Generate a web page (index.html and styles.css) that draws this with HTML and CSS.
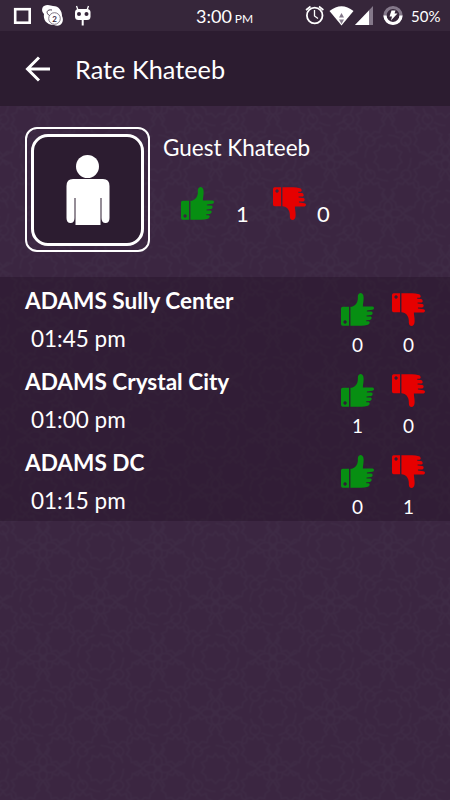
FILE: index.html
```html
<!DOCTYPE html>
<html lang="en">
<head>
  <meta charset="UTF-8">
  <title>Rate Khateeb</title>
  <link rel="stylesheet" href="styles.css">
</head>
<body>

  <!-- background pattern + shared icons -->
  <svg class="backdrop" width="450" height="800">
    <defs>
      <path id="star" d="M0-15 3-11 8-13 9-8 14-6 11-1 14 4 10 7 9 12 4 11 0 15-4 11-9 12-10 7-14 4-11-1-14-6-9-8-8-13-3-11Z"/>
      <g id="knot">
        <ellipse cx="0" cy="-6" rx="4" ry="6"/>
        <ellipse cx="0" cy="6" rx="4" ry="6"/>
        <ellipse cx="-7" cy="0" rx="7" ry="4"/>
        <ellipse cx="7" cy="0" rx="7" ry="4"/>
        <path d="M-14 0-24-5M-14 0-24 5M14 0 24-5M14 0 24 5M0-12-5-20M0-12 5-20M0 12-5 20M0 12 5 20"/>
      </g>
      <g id="rosette">
        <use href="#star"/>
        <circle r="23" stroke-dasharray="12 6"/>
        <circle cx="-18" cy="-17" r="5"/>
        <circle cx="18" cy="-17" r="5"/>
        <circle cx="-18" cy="17" r="5"/>
        <circle cx="18" cy="17" r="5"/>
      </g>
      <pattern id="arabesque" x="-14.5" y="-8.5" width="115" height="111" patternUnits="userSpaceOnUse">
        <g fill="none" stroke="#3e2b45" stroke-width="1.5">
          <use href="#rosette" x="57.5" y="55.5"/>
          <use href="#rosette"/>
          <use href="#rosette" x="115"/>
          <use href="#rosette" y="111"/>
          <use href="#rosette" x="115" y="111"/>
          <use href="#star" x="17.5" y="38"/>
          <use href="#star" x="17.5" y="73"/>
          <use href="#star" x="97.5" y="38"/>
          <use href="#star" x="97.5" y="73"/>
          <use href="#star" x="40" y="18"/>
          <use href="#star" x="75" y="18"/>
          <use href="#star" x="40" y="93"/>
          <use href="#star" x="75" y="93"/>
          <use href="#knot" x="57.5"/>
          <use href="#knot" x="57.5" y="111"/>
          <use href="#knot" y="55.5"/>
          <use href="#knot" x="115" y="55.5"/>
        </g>
      </pattern>
      <symbol id="thumb" viewBox="0 0 98 98">
        <path fill-rule="evenodd" d="M5 41H24V97H5Q0 97 0 92V46Q0 41 5 41ZM12 81a5 5 0 1 0 .1 0Z"/>
        <path d="M28 41C42 40 51 29 50 12C49-3 66-4 67 11C68 22 65 31 65 40H94Q98 41 98 45Q98 49 93 50L77 52V55H90Q94 56 94 60Q94 64 90 65L76 67V70H88Q92 71 91 75Q90 79 86 80L75 81V84H82Q86 85 85 89Q84 93 80 94Q70 97 60 97H28Z"/>
      </symbol>
    </defs>
    <rect width="450" height="800" fill="url(#arabesque)"/>
  </svg>

  <div class="screen">
    <div class="status-bar">
      <div class="status-left">
        <svg width="92" height="30" viewBox="0 0 92 30">
          <rect x="15.2" y="9.2" width="14.5" height="13.5" fill="none" stroke="#fff" stroke-width="2.6"/>
          <path fill="#fff" d="M44 6C48 4 51 6 53 6C59 6 62 11 62 16C65 22 60 28 54 25C46 25 43 19 44 14C41 11 42 7 44 6Z"/>
          <path d="M50 16C45 13 47 9 52 10" fill="none" stroke="#36263a" stroke-width=".9"/>
          <circle cx="54.5" cy="18.5" r="5.8" fill="#fff" stroke="#655869" stroke-width=".8"/>
          <text class="badge-text" x="54.6" y="21.5">2</text>
          <path d="M76.5 6 78 10M88.5 6 87 10" stroke="#fff" stroke-width="1.3"/>
          <rect x="75" y="9" width="15.5" height="11" rx="3.5" fill="#fff"/>
          <circle cx="79" cy="14" r="2" fill="#36263a"/>
          <circle cx="86.5" cy="14" r="2" fill="#36263a"/>
          <path d="M82.7 20V25.5" stroke="#fff" stroke-width="2"/>
        </svg>
      </div>
      <div class="clock">3:00<span>PM</span></div>
      <svg class="status-right" width="100" height="30" viewBox="0 0 100 30">
        <g fill="none" stroke="#fff">
          <circle cx="9.7" cy="15.5" r="7.8" stroke-width="1.8"/>
          <path d="M9.5 10V16L13 18.5" stroke-width="1.3"/>
          <path d="M1 10 5.5 6.5M18.4 10 14 6.5" stroke-width="1.6"/>
        </g>
        <path d="M24.5 11Q36.5 1.5 48.5 11L36.5 25.5Z" fill="#fff"/>
        <path d="M34 17.5 36.5 13 39 17.5ZM34 19.5H39L36.5 24Z" fill="#84788a"/>
        <path d="M50 25 68 6V25Z" fill="#84788a"/>
        <path d="M50 25 64 10.5V25Z" fill="#fff"/>
        <circle cx="88" cy="15.5" r="8" fill="none" stroke="#84788a" stroke-width="3.2"/>
        <path d="M80 15.5A8 8 0 0 0 96 15.5" fill="none" stroke="#fff" stroke-width="3.2"/>
        <path d="M86.5 10.5H90.5L89.5 13.5H92.5L86 20.5L87 16.5H84.5Z" fill="#fff"/>
      </svg>
      <div class="battery">50%</div>
    </div>

    <div class="app-bar">
      <svg class="back" width="26" height="26" viewBox="0 0 26 26">
        <path d="M14 1.5 2.5 13 14 24.5M2.5 13H25" fill="none" stroke="#fff" stroke-width="3"/>
      </svg>
      <h1>Rate Khateeb</h1>
    </div>

    <div class="profile">
      <div class="avatar">
        <div class="avatar-inner">
          <svg width="44" height="71" viewBox="0 0 44 71">
            <circle cx="21.5" cy="11.5" r="11.5" fill="#fff"/>
            <path fill="#fff" d="M7 24H37Q43.5 24 43.5 31V63Q43.5 68 39.5 68Q35.5 68 35.5 63V43H34.5V70H9.5V43H8.5V63Q8.5 68 4.5 68Q.5 68 .5 63V31Q.5 24 7 24Z"/>
          </svg>
        </div>
      </div>
      <div class="profile-info">
        <h2>Guest Khateeb</h2>
        <div class="profile-votes">
          <svg class="thumb up"><use href="#thumb"/></svg>
          <span class="up-count">1</span>
          <svg class="thumb down"><use href="#thumb"/></svg>
          <span class="down-count">0</span>
        </div>
      </div>
    </div>

    <div class="list">
      <div class="row">
        <div class="place">
          <h3>ADAMS Sully Center</h3>
          <p>01:45 pm</p>
        </div>
        <div class="vote"><svg class="thumb up"><use href="#thumb"/></svg><span>0</span></div>
        <div class="vote"><svg class="thumb down"><use href="#thumb"/></svg><span>0</span></div>
      </div>
      <div class="row">
        <div class="place">
          <h3>ADAMS Crystal City</h3>
          <p>01:00 pm</p>
        </div>
        <div class="vote"><svg class="thumb up"><use href="#thumb"/></svg><span>1</span></div>
        <div class="vote"><svg class="thumb down"><use href="#thumb"/></svg><span>0</span></div>
      </div>
      <div class="row">
        <div class="place">
          <h3>ADAMS DC</h3>
          <p>01:15 pm</p>
        </div>
        <div class="vote"><svg class="thumb up"><use href="#thumb"/></svg><span>0</span></div>
        <div class="vote"><svg class="thumb down"><use href="#thumb"/></svg><span>1</span></div>
      </div>
    </div>
  </div>

</body>
</html>
```
FILE: styles.css
```css
* {
  box-sizing: border-box;
}

body {
  margin: 0;
  font-family: Lato, "Liberation Sans", sans-serif;
  background-color: #3b2641;
  color: #fff;
}

h1, h2, h3, p {
  margin: 0;
  font-weight: normal;
  white-space: nowrap;
}

svg {
  display: block;
  flex: none;
}

.backdrop {
  position: absolute;
  top: 0;
  left: 0;
}

.screen {
  position: relative;
  width: 450px;
  height: 800px;
  overflow: hidden;
}

.status-bar {
  display: flex;
  height: 31px;
  background-color: #36263a;
}

.status-left {
  width: 196px;
}

.clock {
  width: 109px;
  font-size: 18px;
  line-height: 32px;
}

.clock span {
  font-size: 12px;
  margin-left: 3px;
}

.battery {
  margin-left: 6px;
  font-size: 15px;
  line-height: 32px;
}

.badge-text {
  font-size: 8px;
  font-weight: bold;
  text-anchor: middle;
  fill: #36263a;
}

.app-bar {
  display: flex;
  align-items: center;
  height: 75px;
  padding-left: 25px;
  background-color: #2c1c30;
}

.app-bar h1 {
  margin-left: 24px;
  font-size: 25.3px;
  line-height: 32px;
}

.profile {
  display: flex;
  height: 171px;
  padding: 21px 0 0 25px;
}

.avatar {
  width: 125px;
  height: 125px;
  padding: 5px 4px;
  border: 2px solid #fff;
  border-radius: 12px;
}

.avatar-inner {
  display: flex;
  justify-content: center;
  height: 112px;
  padding-top: 18px;
  border: 3px solid #fff;
  border-radius: 17px;
  background-color: #2c1c30;
}

.profile-info {
  padding: 7px 0 0 13px;
}

.profile-info h2 {
  font-size: 22.5px;
  line-height: 28px;
}

.profile-votes {
  display: flex;
  padding: 25px 0 0 18px;
  font-size: 22px;
}

.profile-votes span {
  padding-top: 13px;
  line-height: 28px;
}

.up-count {
  width: 37px;
  margin-left: 22px;
}

.down-count {
  margin-left: 11px;
}

.thumb {
  width: 33px;
  height: 33px;
}

.up {
  fill: #078f12;
}

.down {
  fill: #e60000;
  transform: scaleY(-1);
}

.list {
  height: 244px;
  background-color: rgba(34, 18, 38, 0.4);
}

.row {
  display: flex;
  height: 81px;
  padding-left: 25px;
}

.place {
  width: 316px;
  padding-top: 10px;
}

.place h3 {
  font-size: 22.6px;
  font-weight: bold;
  line-height: 28px;
}

.place p {
  padding: 10px 0 0 6px;
  font-size: 22.5px;
  line-height: 28px;
}

.vote {
  width: 51px;
  padding-top: 16px;
  font-size: 19px;
}

.vote span {
  display: block;
  width: 33px;
  padding-top: 7px;
  line-height: 24px;
  text-align: center;
}
```
